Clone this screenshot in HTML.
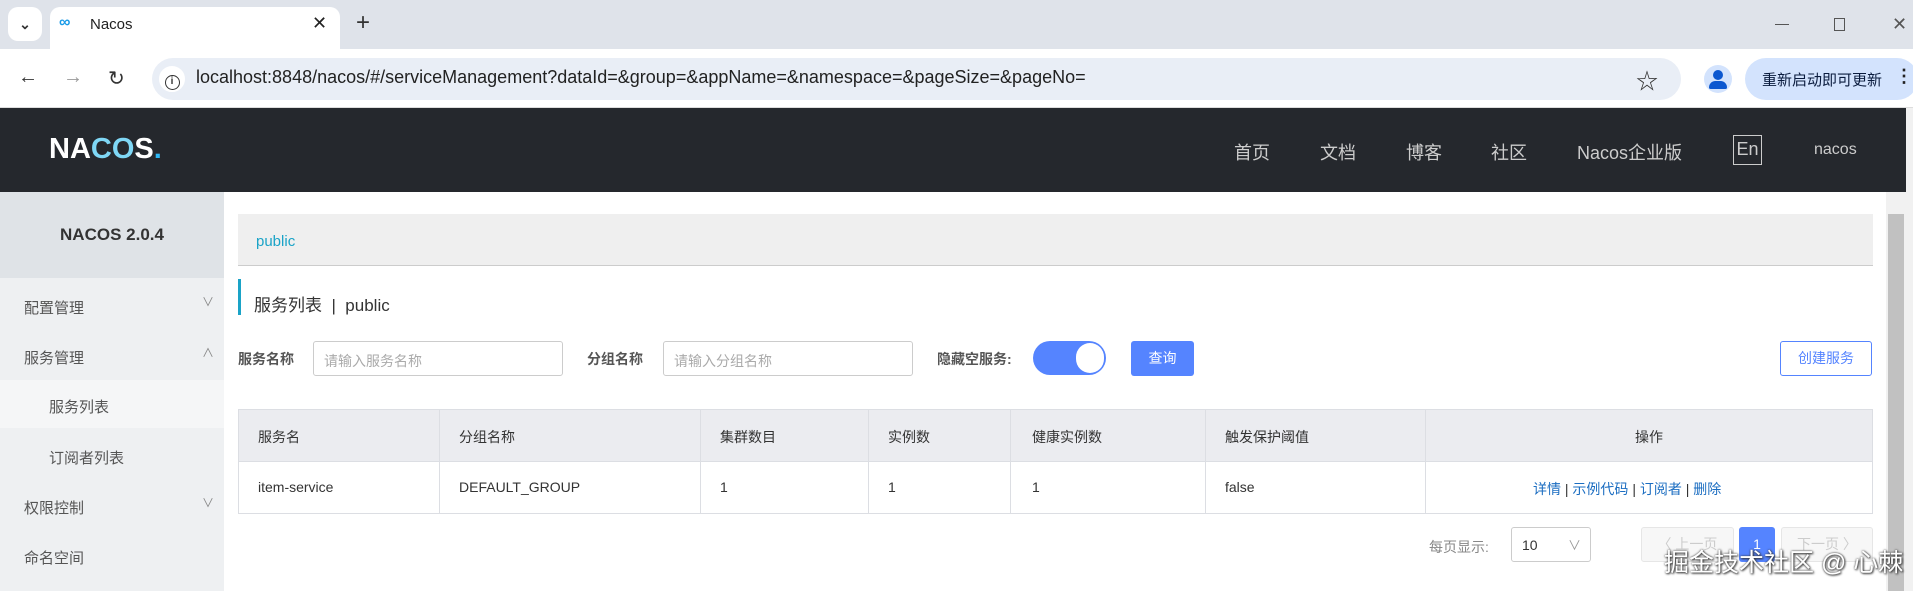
<!DOCTYPE html>
<html><head><meta charset="utf-8"><style>
*{margin:0;padding:0;box-sizing:border-box}
body{width:1913px;height:591px;overflow:hidden;background:#fff;font-family:"Liberation Sans","Noto Sans CJK SC",sans-serif;position:relative;color:#333}
.a{position:absolute;white-space:nowrap}
</style></head><body>
<!-- tab bar -->
<div class="a" style="left:0;top:0;width:1913px;height:49px;background:#dfe3ea"></div>
<div class="a" style="left:8px;top:7px;width:34px;height:34px;background:#fff;border-radius:10px;font-size:14px;text-align:center;line-height:34px;font-weight:bold">&#8964;</div>
<div class="a" style="left:50px;top:7px;width:290px;height:44px;background:#fff;border-radius:10px 10px 0 0"></div>
<div class="a" style="left:59px;top:14px;font-size:16px;color:#1a9be8;font-weight:bold">∞</div>
<div class="a" style="left:90px;top:16px;font-size:15px;color:#222">Nacos</div>
<div class="a" style="left:312px;top:13px;font-size:18px;color:#222">✕</div>
<div class="a" style="left:356px;top:9px;font-size:24px;color:#333">+</div>
<div class="a" style="left:1775px;top:24px;width:14px;height:1px;background:#555"></div>
<div class="a" style="left:1834px;top:18px;width:11px;height:13px;border:1px solid #555"></div>
<div class="a" style="left:1892px;top:14px;font-size:18px;color:#555">✕</div>
<!-- toolbar -->
<div class="a" style="left:0;top:49px;width:1913px;height:59px;background:#fff;border-bottom:1px solid #ddd"></div>
<div class="a" style="left:18px;top:66px;font-size:20px;color:#333">←</div>
<div class="a" style="left:63px;top:66px;font-size:20px;color:#999">→</div>
<div class="a" style="left:108px;top:66px;font-size:20px;color:#333">↻</div>
<div class="a" style="left:152px;top:58px;width:1529px;height:42px;background:#e9eef6;border-radius:21px"></div>
<div class="a" style="left:159px;top:66px;width:26px;height:26px;background:#fff;border-radius:13px;font-size:14px;text-align:center;line-height:24px;border:1.5px solid #fff"><span style="display:inline-block;width:15px;height:15px;border:1.5px solid #333;border-radius:50%;font-size:10px;line-height:12px;font-weight:bold">i</span></div>
<div class="a" style="left:196px;top:67px;font-size:18px;color:#222">localhost:8848/nacos/#/serviceManagement?dataId=&amp;group=&amp;appName=&amp;namespace=&amp;pageSize=&amp;pageNo=</div>
<div class="a" style="left:1636px;top:64px;font-size:22px;color:#333">☆</div>
<div class="a" style="left:1704px;top:65px;width:28px;height:28px;border-radius:14px;background:#d3e3fd"></div>
<div class="a" style="left:1713px;top:70px;width:10px;height:10px;border-radius:5px;background:#0b57d0"></div>
<div class="a" style="left:1709px;top:81px;width:18px;height:8px;border-radius:8px 8px 2px 2px;background:#0b57d0"></div>
<div class="a" style="left:1745px;top:58px;width:173px;height:42px;background:#d3e3fd;border-radius:21px"></div>
<div class="a" style="left:1762px;top:69px;font-size:15px;color:#0a1b3d">重新启动即可更新</div>
<div class="a" style="left:1895px;top:66px;font-size:18px;color:#222;font-weight:bold">⋮</div>
<!-- header -->
<div class="a" style="left:0;top:108px;width:1906px;height:84px;background:#25282d"></div>
<div class="a" style="left:49px;top:133px;font-size:29px;font-weight:bold;color:#fff;letter-spacing:0px">NA<span style="color:#7fd7f5">CO</span>S<span style="color:#2db7f5">.</span></div>
<div class="a" style="left:1234px;top:139px;font-size:18px;color:#ccc">首页</div>
<div class="a" style="left:1320px;top:139px;font-size:18px;color:#ccc">文档</div>
<div class="a" style="left:1406px;top:139px;font-size:18px;color:#ccc">博客</div>
<div class="a" style="left:1491px;top:139px;font-size:18px;color:#ccc">社区</div>
<div class="a" style="left:1577px;top:139px;font-size:18px;color:#ccc">Nacos企业版</div>
<div class="a" style="left:1733px;top:135px;width:29px;height:30px;border:1px solid #ccc;font-size:18px;color:#ccc;text-align:center;line-height:26px">En</div>
<div class="a" style="left:1814px;top:141px;font-size:16px;color:#ccc">nacos</div>
<!-- outer scrollbar -->
<div class="a" style="left:1906px;top:108px;width:7px;height:483px;background:#f1f1f1"></div>
<div class="a" style="left:1886px;top:192px;width:20px;height:399px;background:#f1f1f1"></div>
<div class="a" style="left:1888px;top:214px;width:16px;height:377px;background:#c1c1c1"></div>
<!-- sidebar -->
<div class="a" style="left:0;top:192px;width:224px;height:399px;background:#eef0f2"></div>
<div class="a" style="left:0;top:192px;width:224px;height:86px;background:#dfe3e7;text-align:center;line-height:86px;font-size:17px;font-weight:bold;color:#333">NACOS 2.0.4</div>
<div class="a" style="left:0;top:380px;width:224px;height:48px;background:#f5f6f7"></div>
<div class="a" style="left:24px;top:297px;font-size:15px;color:#555">配置管理</div><div class="a" style="left:202px;top:293px;font-size:12px;color:#888">∨</div>
<div class="a" style="left:24px;top:347px;font-size:15px;color:#555">服务管理</div><div class="a" style="left:202px;top:344px;font-size:12px;color:#888">∧</div>
<div class="a" style="left:49px;top:396px;font-size:15px;color:#555">服务列表</div>
<div class="a" style="left:49px;top:447px;font-size:15px;color:#555">订阅者列表</div>
<div class="a" style="left:24px;top:497px;font-size:15px;color:#555">权限控制</div><div class="a" style="left:202px;top:494px;font-size:12px;color:#888">∨</div>
<div class="a" style="left:24px;top:547px;font-size:15px;color:#555">命名空间</div>
<!-- breadcrumb -->
<div class="a" style="left:238px;top:214px;width:1635px;height:52px;background:#efefef;border-bottom:1px solid #ccc"></div>
<div class="a" style="left:256px;top:233px;font-size:15px;color:#1aa3c7">public</div>
<div class="a" style="left:238px;top:279px;width:3px;height:36px;background:#1aa3c7"></div>
<div class="a" style="left:254px;top:291px;font-size:17px;color:#333">服务列表 &nbsp;|&nbsp; public</div>
<!-- filter -->
<div class="a" style="left:238px;top:349px;font-size:14px;font-weight:bold;color:#555">服务名称</div>
<div class="a" style="left:313px;top:341px;width:250px;height:35px;border:1px solid #ccc;border-radius:3px;font-size:14px;color:#aaa;padding:9px 10px">请输入服务名称</div>
<div class="a" style="left:587px;top:349px;font-size:14px;font-weight:bold;color:#555">分组名称</div>
<div class="a" style="left:663px;top:341px;width:250px;height:35px;border:1px solid #ccc;border-radius:3px;font-size:14px;color:#aaa;padding:9px 10px">请输入分组名称</div>
<div class="a" style="left:937px;top:349px;font-size:14px;font-weight:bold;color:#555">隐藏空服务:</div>
<div class="a" style="left:1033px;top:341px;width:73px;height:34px;background:#5584ff;border-radius:17px"></div>
<div class="a" style="left:1076px;top:343px;width:28px;height:30px;background:#fff;border-radius:15px"></div>
<div class="a" style="left:1131px;top:341px;width:63px;height:35px;background:#5584ff;border-radius:3px;color:#fff;font-size:14px;text-align:center;line-height:35px">查询</div>
<div class="a" style="left:1780px;top:341px;width:92px;height:35px;border:1px solid #5584ff;border-radius:3px;color:#5584ff;font-size:14px;text-align:center;line-height:33px">创建服务</div>
<!-- table -->
<div class="a" style="left:238px;top:409px;width:1635px;height:105px;border:1px solid #dcdee3"></div>
<div class="a" style="left:239px;top:410px;width:1633px;height:52px;background:#ebecf0;border-bottom:1px solid #dcdee3"></div>
<div class="a" style="left:439px;top:410px;width:1px;height:104px;background:#dcdee3"></div>
<div class="a" style="left:700px;top:410px;width:1px;height:104px;background:#dcdee3"></div>
<div class="a" style="left:868px;top:410px;width:1px;height:104px;background:#dcdee3"></div>
<div class="a" style="left:1010px;top:410px;width:1px;height:104px;background:#dcdee3"></div>
<div class="a" style="left:1205px;top:410px;width:1px;height:104px;background:#dcdee3"></div>
<div class="a" style="left:1425px;top:410px;width:1px;height:104px;background:#dcdee3"></div>
<div class="a" style="left:258px;top:427px;font-size:14px;color:#333">服务名</div>
<div class="a" style="left:459px;top:427px;font-size:14px;color:#333">分组名称</div>
<div class="a" style="left:720px;top:427px;font-size:14px;color:#333">集群数目</div>
<div class="a" style="left:888px;top:427px;font-size:14px;color:#333">实例数</div>
<div class="a" style="left:1032px;top:427px;font-size:14px;color:#333">健康实例数</div>
<div class="a" style="left:1225px;top:427px;font-size:14px;color:#333">触发保护阈值</div>
<div class="a" style="left:1425px;top:427px;width:448px;text-align:center;font-size:14px;color:#333">操作</div>
<div class="a" style="left:258px;top:479px;font-size:14px;color:#333">item-service</div>
<div class="a" style="left:459px;top:479px;font-size:14px;color:#333">DEFAULT_GROUP</div>
<div class="a" style="left:720px;top:479px;font-size:14px;color:#333">1</div>
<div class="a" style="left:888px;top:479px;font-size:14px;color:#333">1</div>
<div class="a" style="left:1032px;top:479px;font-size:14px;color:#333">1</div>
<div class="a" style="left:1225px;top:479px;font-size:14px;color:#333">false</div>
<div class="a" style="left:1533px;top:479px;font-size:14px;color:#1b6dc1">详情 <span style="color:#333">|</span> 示例代码 <span style="color:#333">|</span> 订阅者 <span style="color:#333">|</span> 删除</div>
<!-- pagination -->
<div class="a" style="left:1429px;top:537px;font-size:14px;color:#888">每页显示:</div>
<div class="a" style="left:1511px;top:527px;width:80px;height:35px;border:1px solid #ccc;border-radius:3px;font-size:14px;color:#333;padding:9px 10px">10<span style="position:absolute;right:9px;top:7px;color:#999;font-size:13px">∨</span></div>
<div class="a" style="left:1641px;top:527px;width:93px;height:35px;border:1px solid #e6e6e6;background:#f7f7f7;border-radius:3px;font-size:14px;color:#ccc;text-align:center;line-height:33px">〈 上一页</div>
<div class="a" style="left:1739px;top:527px;width:36px;height:35px;background:#5584ff;border-radius:3px;font-size:14px;color:#fff;text-align:center;line-height:35px">1</div>
<div class="a" style="left:1781px;top:527px;width:92px;height:35px;border:1px solid #e6e6e6;background:#f7f7f7;border-radius:3px;font-size:14px;color:#ccc;text-align:center;line-height:33px">下一页 〉</div>
<div class="a" style="left:1664px;top:543px;font-size:25px;color:#fff;text-shadow:0 0 2px #333,1px 1px 2px #333">掘金技术社区 @ 心棘</div>
</body></html>
